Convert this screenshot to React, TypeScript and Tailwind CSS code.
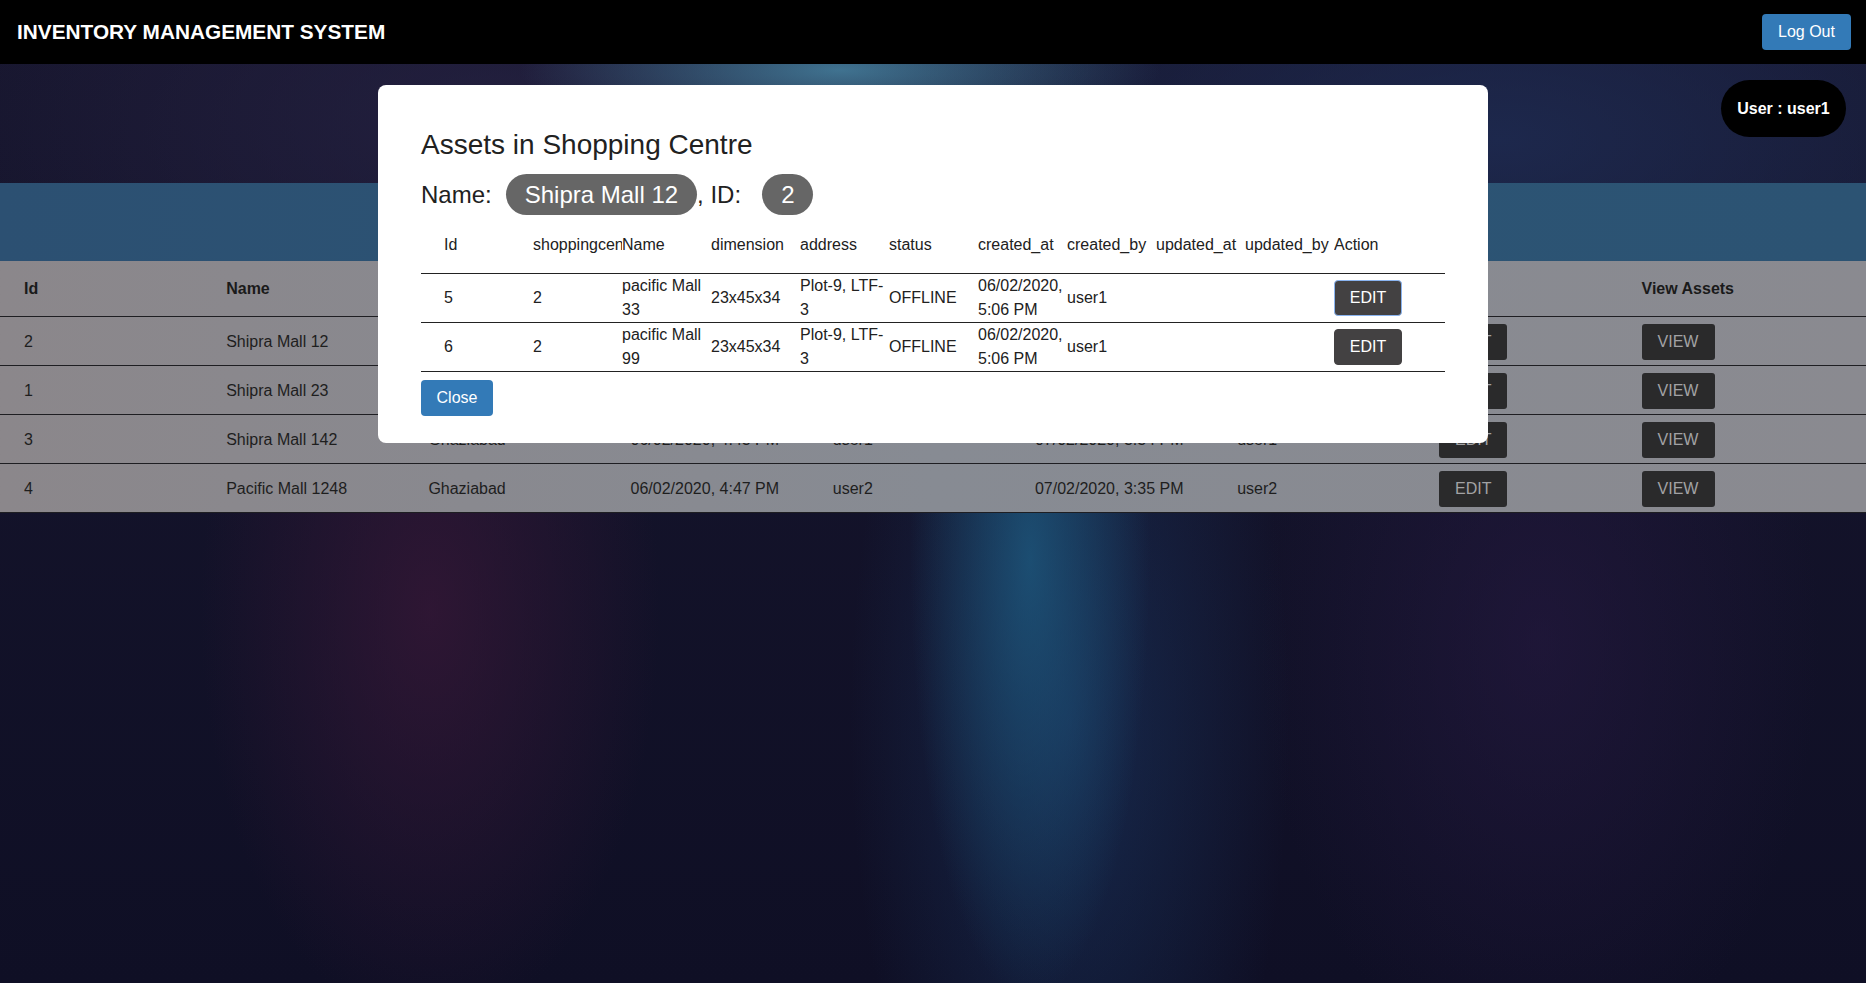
import React from "react";

const mainRows = [
  ["2", "Shipra Mall 12", "Ghaziabad", "06/02/2020, 4:31 PM", "user1", "07/02/2020, 3:33 PM", "user1"],
  ["1", "Shipra Mall 23", "Ghaziabad", "06/02/2020, 4:39 PM", "user1", "07/02/2020, 3:34 PM", "user1"],
  ["3", "Shipra Mall 142", "Ghaziabad", "06/02/2020, 4:43 PM", "user1", "07/02/2020, 3:34 PM", "user1"],
  ["4", "Pacific Mall 1248", "Ghaziabad", "06/02/2020, 4:47 PM", "user2", "07/02/2020, 3:35 PM", "user2"],
];

const mainHeads = ["Id", "Name", "Address", "created_at", "created_by", "updated_at", "updated_by", "Edit", "View Assets"];

const assetHeads = [
  "Id",
  "shoppingcentre_id",
  "Name",
  "dimension",
  "address",
  "status",
  "created_at",
  "created_by",
  "updated_at",
  "updated_by",
  "Action",
];

const assets = [
  ["5", "2", "pacific Mall 33", "23x45x34", "Plot-9, LTF-3", "OFFLINE", "06/02/2020, 5:06 PM", "user1", "", ""],
  ["6", "2", "pacific Mall 99", "23x45x34", "Plot-9, LTF-3", "OFFLINE", "06/02/2020, 5:06 PM", "user1", "", ""],
];

export default function App() {
  return (
    <div className="relative min-h-[983px] w-full overflow-hidden bg-[#121128] font-['Liberation_Sans',Arial,sans-serif] bg-[radial-gradient(ellipse_320px_70px_at_840px_70px,rgba(70,130,160,0.85),transparent),radial-gradient(ellipse_120px_440px_at_1030px_560px,rgba(30,92,130,0.75),transparent),radial-gradient(ellipse_220px_560px_at_1070px_720px,rgba(28,66,115,0.5),transparent),radial-gradient(ellipse_230px_420px_at_430px_610px,rgba(58,24,56,0.7),transparent),radial-gradient(ellipse_280px_440px_at_1540px_640px,rgba(40,26,68,0.55),transparent),radial-gradient(ellipse_700px_320px_at_1500px_140px,rgba(32,48,90,0.7),transparent),radial-gradient(ellipse_600px_300px_at_500px_120px,rgba(40,36,70,0.7),transparent),linear-gradient(to_bottom,#17162e,#0f0f25)]">
      {/* Header */}
      <header className="flex h-16 items-center justify-between bg-black pl-[17px] pr-[15px]">
        <h1 className="text-[20.8px] font-bold leading-none text-white">INVENTORY MANAGEMENT SYSTEM</h1>
        <button className="flex h-9 w-[89px] items-center justify-center rounded-[4px] bg-[#337ab7] text-[16px] text-white">
          Log Out
        </button>
      </header>

      {/* User pill */}
      <div className="flex justify-end pr-[20px] pt-4">
        <div className="flex h-[57px] w-[125px] items-center justify-center rounded-full bg-black text-[16px] font-bold text-white">
          User : user1
        </div>
      </div>

      {/* Blue band */}
      <div className="mt-[46px] h-[78px] bg-gradient-to-r from-[#2c5072] via-[#2c5474] to-[#2c5373]" />

      {/* Main table */}
      <div className="bg-gradient-to-r from-[#8b878b] via-[#878b93] to-[#8a8a90] text-[16px] text-[#1e1e1e]">
        <div className="grid h-[56px] grid-cols-[repeat(9,202.2px)] items-center border-b border-[#1e1e22] pl-[24px] pt-[1px] font-bold text-[#1a1a1a]">
          {mainHeads.map((h) => (
            <div key={h}>{h}</div>
          ))}
        </div>
        {mainRows.map((r) => (
          <div
            key={r[0]}
            className="grid h-[49px] grid-cols-[repeat(9,202.2px)] items-center border-b border-[#1e1e22] pl-[24px] pt-[1px]"
          >
            {r.map((c, i) => (
              <div key={i}>{c}</div>
            ))}
            <div>
              <button className="flex h-9 w-[68px] items-center justify-center rounded-[3px] bg-[#2a2a2b] text-[#a2a2a4]">
                EDIT
              </button>
            </div>
            <div>
              <button className="flex h-9 w-[73px] items-center justify-center rounded-[3px] bg-[#2a2a2b] text-[#a2a2a4]">
                VIEW
              </button>
            </div>
          </div>
        ))}
      </div>

      {/* Modal */}
      <div className="absolute left-1/2 top-[85px] w-[1110px] -translate-x-1/2 rounded-[8px] bg-white px-[43px] pb-[27px] pt-[43px] text-[#212121]">
        <h2 className="text-[28px] leading-[34px]">Assets in Shopping Centre</h2>
        <div className="mt-[12px] flex h-[41px] items-center text-[24px]">
          <span>Name:</span>
          <span className="ml-[14px] flex h-[41px] items-center rounded-full bg-[#666666] px-[19px] text-white">
            Shipra Mall 12
          </span>
          <span>, ID:</span>
          <span className="ml-[21px] flex h-[41px] items-center rounded-full bg-[#666666] px-[19px] text-white">
            2
          </span>
        </div>

        <div className="w-[1024px] text-[16px] leading-[24px]">
          <div className="grid h-[59px] grid-cols-[repeat(11,89px)] items-center border-b border-[#222] pl-[23px] pt-[2px]">
            {assetHeads.map((h) => (
              <div key={h} className="overflow-hidden whitespace-nowrap">
                {h}
              </div>
            ))}
          </div>
          {assets.map((a, idx) => (
            <div
              key={a[0]}
              className="grid h-[49px] grid-cols-[repeat(11,89px)] items-center border-b border-[#222] pl-[23px]"
            >
              {a.map((c, i) => (
                <div key={i} className="overflow-hidden">
                  {c}
                </div>
              ))}
              <div>
                <button
                  className={
                    idx === 0
                      ? "flex h-9 w-[68px] items-center justify-center rounded-[4px] border border-[#8ab4f0] bg-[#434142] text-white"
                      : "flex h-9 w-[68px] items-center justify-center rounded-[4px] border border-[#434142] bg-[#434142] text-white"
                  }
                >
                  EDIT
                </button>
              </div>
            </div>
          ))}
        </div>

        <button className="mt-[8px] flex h-9 w-[72px] items-center justify-center rounded-[4px] bg-[#337ab7] text-[16px] text-white">
          Close
        </button>
      </div>
    </div>
  );
}
